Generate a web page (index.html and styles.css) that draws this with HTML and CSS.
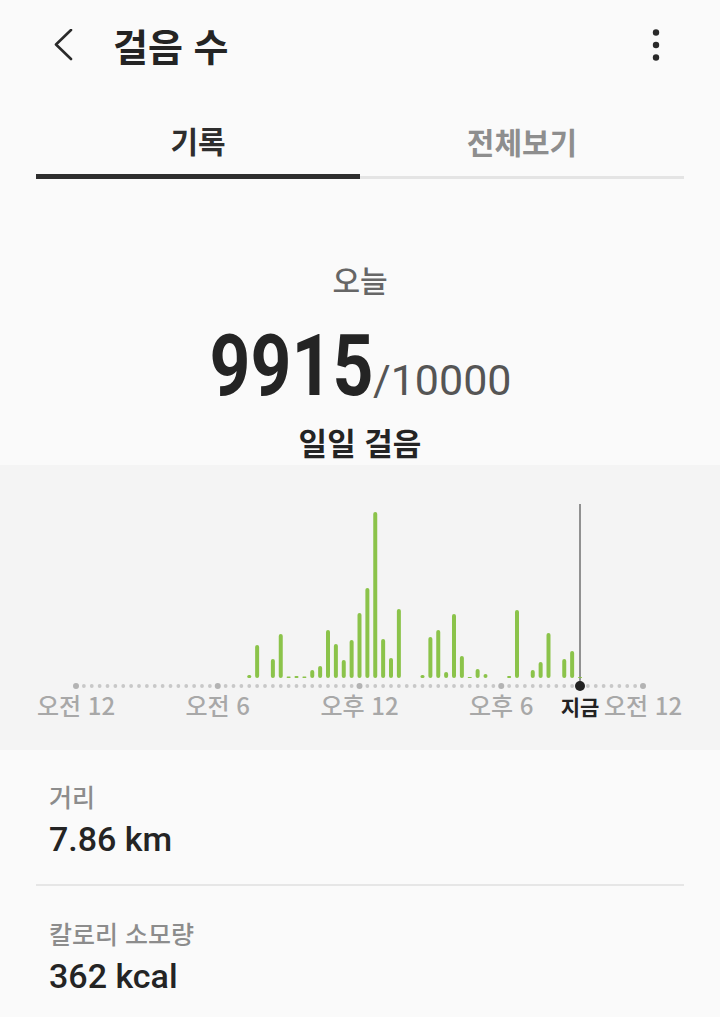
FILE: index.html
```html
<!DOCTYPE html>
<html lang="ko">
<head>
    <meta charset="UTF-8">
    <meta name="viewport" content="width=device-width, initial-scale=1.0">
    <title>걸음 수</title>
    <link rel="stylesheet" href="styles.css">
</head>
<body>
    <header class="appbar">
        <svg class="back" width="24" height="32" viewBox="0 0 24 32">
            <path d="M20 1 L5 15.5 L20 30" fill="none" stroke="#2a2a2a" stroke-width="2.6" stroke-linecap="round" stroke-linejoin="round"/>
        </svg>
        <h1 class="title">걸음 수</h1>
        <svg class="more" width="10" height="32" viewBox="0 0 10 32">
            <circle cx="5" cy="3.5" r="3.2" fill="#2a2a2a"/>
            <circle cx="5" cy="16" r="3.2" fill="#2a2a2a"/>
            <circle cx="5" cy="28.5" r="3.2" fill="#2a2a2a"/>
        </svg>
    </header>

    <nav class="tabs">
        <div class="tab active">기록</div>
        <div class="tab">전체보기</div>
    </nav>

    <section class="summary">
        <div class="today">오늘</div>
        <div class="count"><span class="steps">9915</span><span class="goal">/10000</span></div>
        <div class="caption">일일 걸음</div>
    </section>

    <section class="chart">
        <svg width="720" height="285" viewBox="0 0 720 285">
            <line class="now-line" x1="580" y1="39" x2="580" y2="221"/>
            <g class="bars">
                <rect x="247.25" y="210" width="4" height="3" rx="1.5"/>
                <rect x="255.13" y="180" width="4" height="33" rx="2"/>
                <rect x="270.88" y="194" width="4" height="19" rx="2"/>
                <rect x="278.75" y="169" width="4" height="44" rx="2"/>
                <rect x="286.63" y="211.5" width="4" height="1.5" rx="0.75"/>
                <rect x="294.5" y="211" width="4" height="2" rx="1"/>
                <rect x="302.38" y="211.5" width="4" height="1.5" rx="0.75"/>
                <rect x="310.25" y="205" width="4" height="8" rx="2"/>
                <rect x="318.13" y="201" width="4" height="12" rx="2"/>
                <rect x="326" y="165" width="4" height="48" rx="2"/>
                <rect x="333.88" y="179" width="4" height="34" rx="2"/>
                <rect x="341.75" y="195" width="4" height="18" rx="2"/>
                <rect x="349.63" y="175" width="4" height="38" rx="2"/>
                <rect x="357.5" y="148" width="4" height="65" rx="2"/>
                <rect x="365.38" y="123" width="4" height="90" rx="2"/>
                <rect x="373.25" y="47" width="4" height="166" rx="2"/>
                <rect x="381.13" y="174" width="4" height="39" rx="2"/>
                <rect x="389" y="193" width="4" height="20" rx="2"/>
                <rect x="396.88" y="144" width="4" height="69" rx="2"/>
                <rect x="420.5" y="210" width="4" height="3" rx="1.5"/>
                <rect x="428.38" y="172" width="4" height="41" rx="2"/>
                <rect x="436.25" y="165" width="4" height="48" rx="2"/>
                <rect x="444.13" y="207" width="4" height="6" rx="2"/>
                <rect x="452" y="149" width="4" height="64" rx="2"/>
                <rect x="459.88" y="191" width="4" height="22" rx="2"/>
                <rect x="467.75" y="212" width="4" height="1" rx="0.5"/>
                <rect x="475.63" y="204" width="4" height="9" rx="2"/>
                <rect x="483.5" y="209" width="4" height="4" rx="2"/>
                <rect x="507.13" y="211" width="4" height="2" rx="1"/>
                <rect x="515" y="145" width="4" height="68" rx="2"/>
                <rect x="530.75" y="205" width="4" height="8" rx="2"/>
                <rect x="538.63" y="197" width="4" height="16" rx="2"/>
                <rect x="546.5" y="168" width="4" height="45" rx="2"/>
                <rect x="562.25" y="194" width="4" height="19" rx="2"/>
                <rect x="570.13" y="186" width="4" height="27" rx="2"/>
                <rect x="578" y="212" width="4" height="1" rx="0.5"/>
            </g>
            <line class="axis" x1="76" y1="221" x2="643" y2="221"/>
            <g class="ticks">
                <circle cx="76" cy="221" r="3"/>
                <circle cx="217.75" cy="221" r="3"/>
                <circle cx="359.5" cy="221" r="3"/>
                <circle cx="501.25" cy="221" r="3"/>
                <circle cx="643" cy="221" r="3"/>
            </g>
            <circle class="now-dot" cx="580" cy="221" r="5"/>
            <text class="label" x="76" y="250">오전 12</text>
            <text class="label" x="217.75" y="250">오전 6</text>
            <text class="label" x="359.5" y="250">오후 12</text>
            <text class="label" x="501.25" y="250">오후 6</text>
            <text class="label now" x="580" y="250">지금</text>
            <text class="label" x="643" y="250">오전 12</text>
        </svg>
    </section>

    <section class="stats">
        <div class="stat">
            <div class="stat-label">거리</div>
            <div class="stat-value">7.86 km</div>
        </div>
        <div class="stat">
            <div class="stat-label">칼로리 소모량</div>
            <div class="stat-value">362 kcal</div>
        </div>
    </section>
</body>
</html>
```

FILE: styles.css
```css
:root {
    --text-primary: #242424;
    --text-secondary: #8c8c8c;
    --background-color: #fafafa;
    --chart-background: #f4f4f4;
    --bar-color: #8bc34a;
    --divider: #e6e6e6;
}

* {
    margin: 0;
    padding: 0;
    box-sizing: border-box;
}

body {
    font-family: "Noto Sans CJK KR", sans-serif;
    color: var(--text-primary);
    background-color: var(--background-color);
    width: 720px;
}

/* 상단 바 */
.appbar {
    height: 90px;
    display: flex;
    align-items: center;
}

.back {
    margin-left: 51px;
}

.title {
    margin-left: 38px;
    font-size: 38px;
    font-weight: 700;
    line-height: 46px;
}

.more {
    margin-left: auto;
    margin-right: 59px;
}

/* 탭 */
.tabs {
    margin: 0 36px;
    display: grid;
    grid-template-columns: 1fr 1fr;
}

.tab {
    height: 89px;
    padding-top: 15px;
    display: flex;
    align-items: center;
    justify-content: center;
    font-size: 30px;
    font-weight: 700;
    color: #8e8e8e;
    border-bottom: 3px solid #e4e4e4;
}

.tab.active {
    color: #2e2e2e;
    border-bottom: 5px solid #2e2e2e;
}

/* 오늘 요약 */
.summary {
    text-align: center;
    height: 286px;
    padding-top: 80px;
}

.today {
    font-size: 30px;
    font-weight: 500;
    line-height: 40px;
    color: #666666;
}

.count {
    margin-top: 22px;
    line-height: 90px;
    height: 90px;
}

.steps {
    display: inline-block;
    margin-left: -33px;
    font-family: Roboto, sans-serif;
    font-size: 86px;
    font-weight: 700;
    color: var(--text-primary);
    transform: scaleX(0.83);
    transform-origin: right center;
}

.goal {
    font-family: Roboto, sans-serif;
    font-size: 43px;
    color: #555555;
}

.caption {
    margin-top: 11px;
    font-size: 31px;
    font-weight: 700;
    line-height: 40px;
}

/* 차트 */
.chart {
    background: var(--chart-background);
    height: 285px;
}

.chart svg {
    display: block;
}

.bars rect {
    fill: var(--bar-color);
}

.axis {
    stroke: #c8c8c8;
    stroke-width: 3.8;
    stroke-dasharray: 0 7.875;
    stroke-linecap: round;
}

.ticks circle {
    fill: #b3b3b3;
}

.now-line {
    stroke: #707070;
    stroke-width: 1.5;
}

.now-dot {
    fill: #222222;
}

.label {
    font-family: "Noto Sans CJK KR", sans-serif;
    font-size: 24px;
    font-weight: 500;
    fill: #a8a8a8;
    text-anchor: middle;
}

.label.now {
    font-size: 21px;
    font-weight: 700;
    fill: #222222;
}

/* 거리 / 칼로리 */
.stats {
    margin: 0 36px;
}

.stat {
    padding: 30px 13px 25px;
}

.stat + .stat {
    border-top: 2px solid var(--divider);
    padding-top: 31px;
}

.stat-label {
    font-size: 25px;
    font-weight: 500;
    line-height: 32px;
    color: var(--text-secondary);
}

.stat-value {
    margin-top: 7px;
    font-family: Roboto, sans-serif;
    font-size: 34px;
    font-weight: 500;
    line-height: 40px;
}
```
